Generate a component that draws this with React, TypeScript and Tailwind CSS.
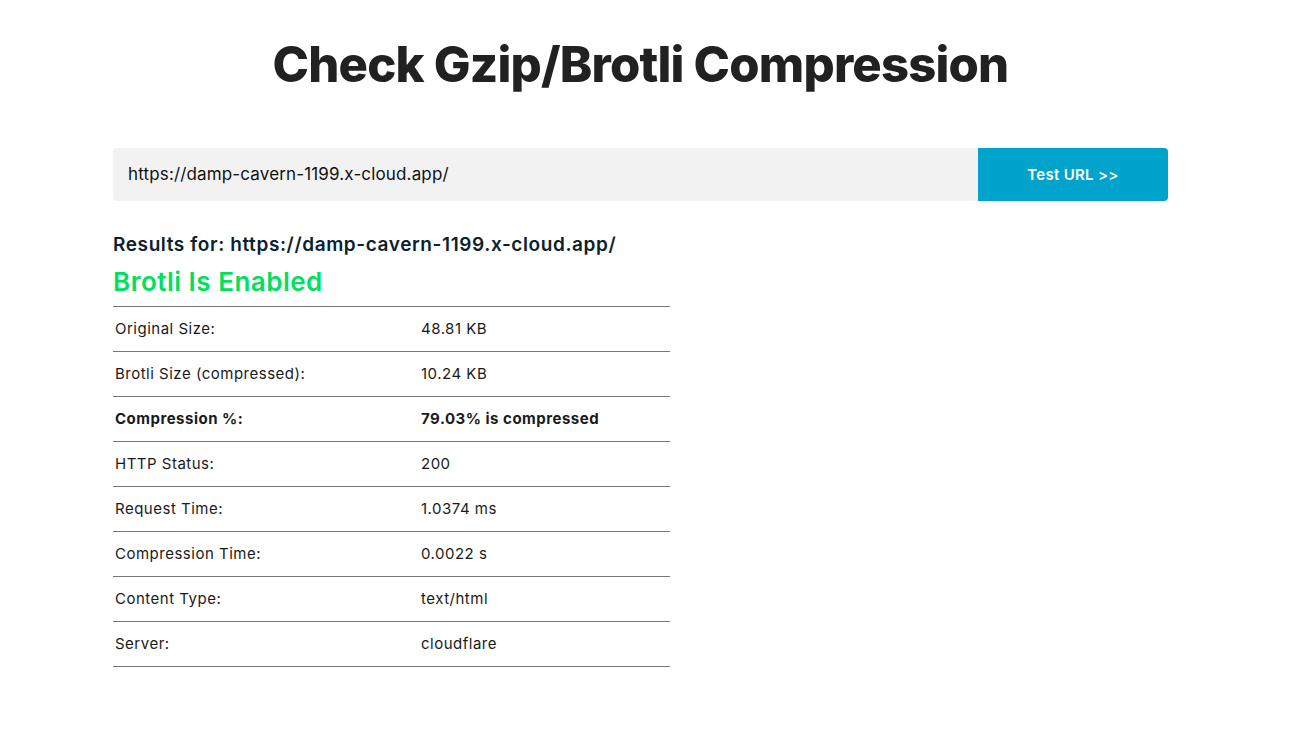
export default function App() {
  const rows = [
    { label: "Original Size:", value: "48.81 KB" },
    { label: "Brotli Size (compressed):", value: "10.24 KB" },
    { label: "Compression %:", value: "79.03% is compressed", bold: true },
    { label: "HTTP Status:", value: "200" },
    { label: "Request Time:", value: "1.0374 ms" },
    { label: "Compression Time:", value: "0.0022 s" },
    { label: "Content Type:", value: "text/html" },
    { label: "Server:", value: "cloudflare" },
  ];

  return (
    <div className="min-h-screen bg-white font-['Inter',sans-serif] text-[#222]">
      <div className="ml-[113px] w-[1055px] pt-[35px]">
        {/* Title */}
        <h1 className="text-center text-[49px] font-extrabold leading-[60px] tracking-[-0.8px] text-[#212121]">
          Check Gzip/Brotli Compression
        </h1>

        {/* URL form */}
        <div className="mt-[53px] flex h-[53px]">
          <div className="flex flex-1 items-center rounded-l-[4px] bg-[#f2f2f2] px-[15px] text-[17px] tracking-[0.15px] text-[#111]">
            https://damp-cavern-1199.x-cloud.app/
          </div>
          <button className="w-[190px] rounded-r-[4px] bg-[#00a3cc] pt-[1px] text-[15px] font-semibold tracking-[0.3px] text-white">
            Test URL &gt;&gt;
          </button>
        </div>

        {/* Results */}
        <div className="mt-[32px] w-[557px]">
          <div className="text-[19px] font-semibold leading-[24px] tracking-[0.6px] text-[#0b2130]">
            Results for: https://damp-cavern-1199.x-cloud.app/
          </div>
          <div className="mt-[10px] text-[26px] font-semibold leading-[30px] tracking-[0.5px] text-[#00e05f]">
            Brotli Is Enabled
          </div>
          <div className="mt-[9px] border-t border-[#777]">
            {rows.map((r) => (
              <div
                key={r.label}
                className={`flex h-[45px] items-center border-b border-[#777] px-[2px] text-[15px] tracking-[0.5px] text-[#1a1a1a] ${r.bold ? "font-bold" : ""}`}
              >
                <div className="w-[306px]">{r.label}</div>
                <div>{r.value}</div>
              </div>
            ))}
          </div>
        </div>
      </div>
    </div>
  );
}
